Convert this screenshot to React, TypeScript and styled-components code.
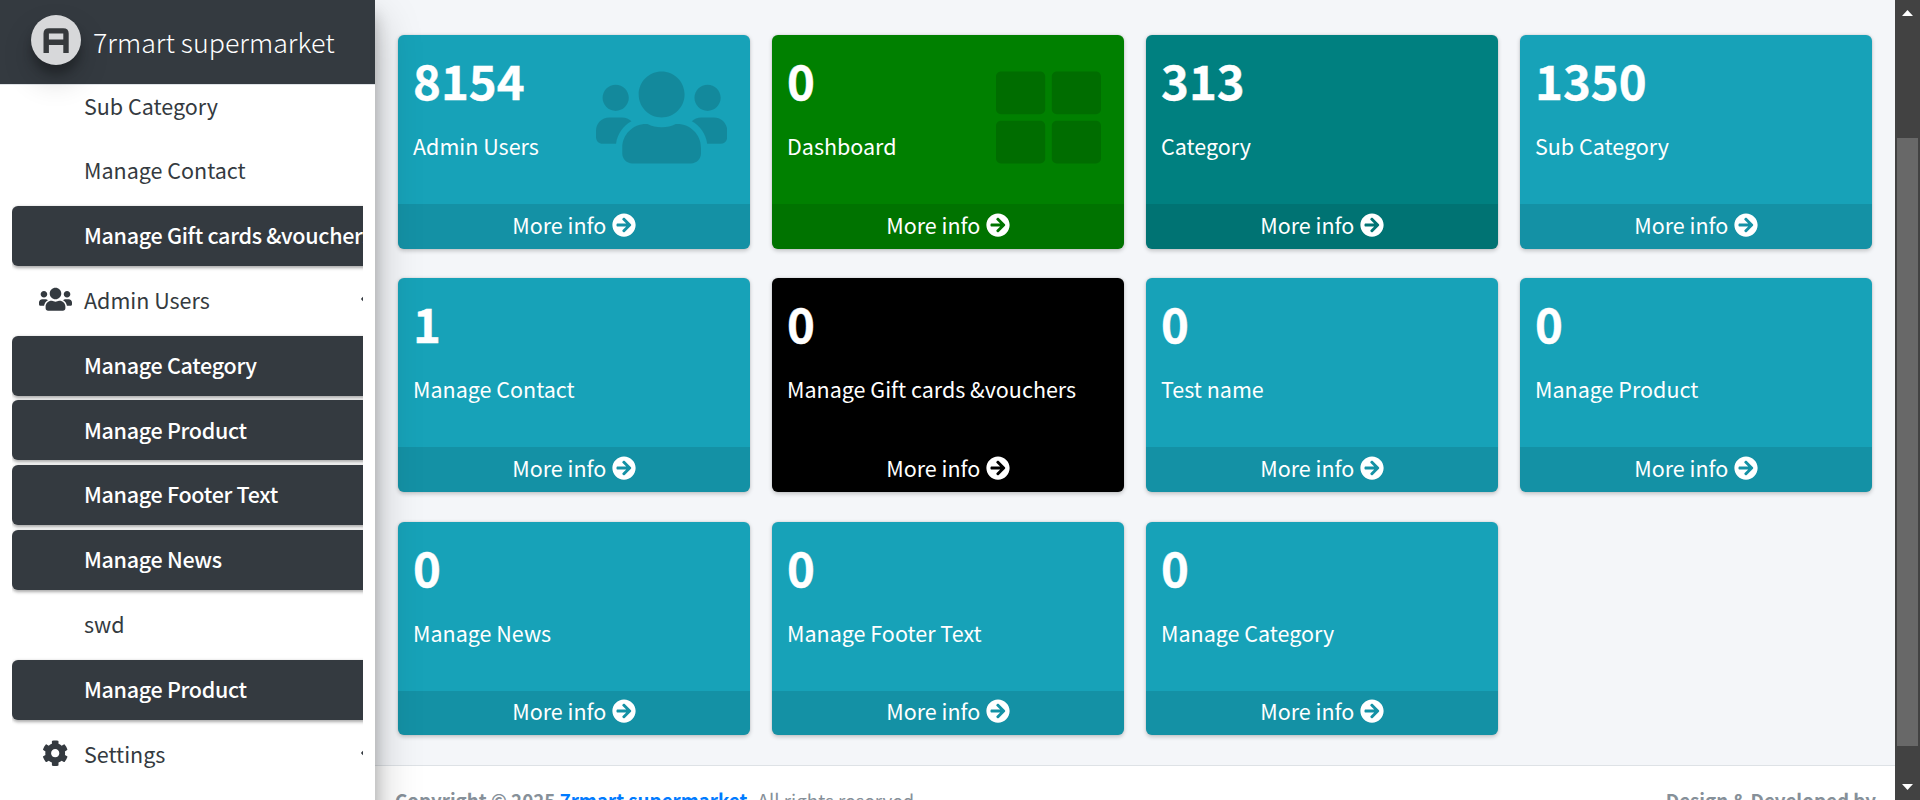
import React from "react";
import styled, { createGlobalStyle } from "styled-components";
import { FaUsers, FaCog, FaThLarge, FaArrowCircleRight, FaAngleLeft } from "react-icons/fa";

const GlobalStyle = createGlobalStyle`
  * { box-sizing: border-box; }
  body {
    margin: 0;
    overflow: hidden;
    background: #f4f6f9;
    font-family: "Source Sans Pro", "Noto Sans CJK SC", sans-serif;
    font-size: 21.5px;
    line-height: 36px;
    color: #212529;
  }
`;

const Page = styled.div`
  display: flex;
  width: 100%;
  height: 800px;
  overflow: hidden;
`;

const Sidebar = styled.aside`
  position: relative;
  z-index: 2;
  flex: 0 0 375px;
  min-width: 0;
  height: 1000px;
  background: #fff;
  box-shadow: 0 21px 42px rgba(0, 0, 0, 0.25), 0 15px 15px rgba(0, 0, 0, 0.22);
`;

const Brand = styled.a`
  position: relative;
  z-index: 1;
  display: flex;
  align-items: flex-start;
  height: 85px;
  padding: 15px 12px 0 31px;
  border-bottom: 1px solid #dee2e6;
  background: #343a40;
  color: #fff;
  white-space: nowrap;
`;

const LogoDisc = styled.span`
  display: flex;
  width: 50px;
  height: 50px;
  border-radius: 50%;
  background: #d7d8da;
  box-shadow: 0 15px 30px rgba(0, 0, 0, 0.19), 0 9px 9px rgba(0, 0, 0, 0.23);
`;

const BrandName = styled.span`
  margin: 9px 0 0 12px;
  font-size: 26.8px;
  font-weight: 300;
`;

const Nav = styled.nav`
  height: 715px;
  margin: 0 12px;
  overflow: hidden;
`;

const NavList = styled.ul`
  width: 372px;
  margin: -8.6px 0 0;
  padding: 0;
  list-style: none;
`;

const NavItem = styled.li<{ $active?: boolean }>`
  display: flex;
  align-items: center;
  height: 60px;
  margin-bottom: 4.8px;
  padding: 0 0 1.5px 24px;
  border-radius: 6px;
  white-space: nowrap;
  color: ${(p) => (p.$active ? "#fff" : "#343a40")};
  font-weight: ${(p) => (p.$active ? 500 : 400)};
  letter-spacing: ${(p) => (p.$active ? "-0.3px" : "normal")};
  background: ${(p) => (p.$active ? "#343a40" : "transparent")};
  box-shadow: ${(p) =>
    p.$active ? "0 1.5px 4.5px rgba(0,0,0,.12), 0 1.5px 3px rgba(0,0,0,.24)" : "none"};
`;

const NavIcon = styled.span<{ $wide?: boolean }>`
  display: flex;
  justify-content: center;
  width: 38.4px;
  margin: 0 9.6px 1px 0;

  svg {
    flex: none;
    width: ${(p) => (p.$wide ? 33 : 26.4)}px;
    height: 26.4px;
  }
`;

const NavArrow = styled.span`
  display: flex;
  margin: 0 12px 2px auto;

  svg { width: 12px; height: 24px; }
`;

const Main = styled.main`
  flex: 1;
  min-width: 0;
  display: flex;
  flex-direction: column;
  height: 900px;
`;

const Content = styled.section`
  height: 765px;
  padding: 35px 23px 0;
`;

const Grid = styled.div`
  display: grid;
  grid-template-columns: repeat(4, 352px);
  grid-auto-rows: 213.5px;
  gap: 29.8px 22px;
`;

const Card = styled.article<{ $bg: string }>`
  display: flex;
  flex-direction: column;
  border-radius: 6px;
  overflow: hidden;
  background: ${(p) => p.$bg};
  color: #fff;
  box-shadow: 0 0 1.5px rgba(0, 0, 0, 0.13), 0 1.5px 4.5px rgba(0, 0, 0, 0.2);
`;

const CardBody = styled.div`
  display: flex;
  justify-content: space-between;
  flex: 1;
  padding: 13px 22.8px 0 15px;
`;

const Count = styled.h3`
  height: 63px;
  margin: 0 0 17px;
  font-size: 47.3px;
  font-weight: 700;
  line-height: 63px;
  -webkit-text-stroke: 0.4px #fff;
`;

const Label = styled.p`
  margin: 0;
  white-space: nowrap;
`;

const CardIcon = styled.div<{ $wide?: boolean }>`
  display: flex;
  margin-top: 17px;
  height: 105px;
  color: rgba(0, 0, 0, 0.15);

  svg {
    flex: none;
    width: ${(p) => (p.$wide ? 131.25 : 105)}px;
    height: 105px;
  }
`;

const MoreInfo = styled.a`
  display: flex;
  justify-content: center;
  align-items: center;
  gap: 5.5px;
  height: 44.5px;
  padding-bottom: 3px;
  background: rgba(0, 0, 0, 0.1);

  svg { width: 24px; height: 24px; }
`;

const Footer = styled.footer`
  display: flex;
  justify-content: space-between;
  padding: 16px 19px 24px 20px;
  height: 135px;
  border-top: 1px solid #dee2e6;
  background: #fff;
  color: #869099;
  font-size: 18.76px;
  white-space: nowrap;
`;

const FooterLink = styled.a`
  color: #007bff;
`;

const ScrollTrack = styled.div`
  display: flex;
  flex-direction: column;
  align-items: center;
  flex: 0 0 25px;
  height: 800px;
  padding: 10px 0;
  background: #424242;
`;

const ScrollArrow = styled.svg`
  display: block;
  width: 11px;
  height: 6px;
`;

const ScrollThumb = styled.div`
  width: 21px;
  height: 608px;
  margin: 122px 0 38px;
  background: #686868;
`;

const navItems: {
  label: string;
  active?: boolean;
  icon?: React.ReactNode;
  wide?: boolean;
  arrow?: boolean;
}[] = [
  { label: "Sub Category" },
  { label: "Manage Contact" },
  { label: "Manage Gift cards &vouchers", active: true },
  { label: "Admin Users", icon: <FaUsers />, wide: true, arrow: true },
  { label: "Manage Category", active: true },
  { label: "Manage Product", active: true },
  { label: "Manage Footer Text", active: true },
  { label: "Manage News", active: true },
  { label: "swd" },
  { label: "Manage Product", active: true },
  { label: "Settings", icon: <FaCog />, arrow: true },
];

const INFO = "#17a2b8";

const cards: {
  count: number;
  label: string;
  bg: string;
  icon?: React.ReactNode;
  wide?: boolean;
}[] = [
  { count: 8154, label: "Admin Users", bg: INFO, icon: <FaUsers />, wide: true },
  { count: 0, label: "Dashboard", bg: "#008000", icon: <FaThLarge /> },
  { count: 313, label: "Category", bg: "#008080" },
  { count: 1350, label: "Sub Category", bg: INFO },
  { count: 1, label: "Manage Contact", bg: INFO },
  { count: 0, label: "Manage Gift cards &vouchers", bg: "#000" },
  { count: 0, label: "Test name", bg: INFO },
  { count: 0, label: "Manage Product", bg: INFO },
  { count: 0, label: "Manage News", bg: INFO },
  { count: 0, label: "Manage Footer Text", bg: INFO },
  { count: 0, label: "Manage Category", bg: INFO },
];

export default function App() {
  return (
    <>
      <GlobalStyle />
      <Page>
        <Sidebar>
          <Brand>
            <LogoDisc>
              <svg width="50" height="50" viewBox="0 0 50 50">
                <path
                  d="M15.2 38V18.5Q15.2 15.9 18 15.9H32.2Q35 15.9 35 18.5V38M15.2 27.3H35"
                  fill="none"
                  stroke="#36393c"
                  strokeWidth="5.4"
                />
              </svg>
            </LogoDisc>
            <BrandName>7rmart supermarket</BrandName>
          </Brand>
          <Nav>
            <NavList>
              {navItems.map((item, i) => (
                <NavItem key={i} $active={item.active}>
                  <NavIcon $wide={item.wide}>{item.icon}</NavIcon>
                  {item.label}
                  {item.arrow && (
                    <NavArrow>
                      <FaAngleLeft />
                    </NavArrow>
                  )}
                </NavItem>
              ))}
            </NavList>
          </Nav>
        </Sidebar>
        <Main>
          <Content>
            <Grid>
              {cards.map((card, i) => (
                <Card key={i} $bg={card.bg}>
                  <CardBody>
                    <div>
                      <Count>{card.count}</Count>
                      <Label>{card.label}</Label>
                    </div>
                    {card.icon && <CardIcon $wide={card.wide}>{card.icon}</CardIcon>}
                  </CardBody>
                  <MoreInfo>
                    More info <FaArrowCircleRight />
                  </MoreInfo>
                </Card>
              ))}
            </Grid>
          </Content>
          <Footer>
            <div>
              <strong>
                Copyright © 2025 <FooterLink>7rmart supermarket</FooterLink>.
              </strong>{" "}
              All rights reserved.
            </div>
            <strong>Design &amp; Developed by</strong>
          </Footer>
        </Main>
        <ScrollTrack>
          <ScrollArrow viewBox="0 0 11 6">
            <path d="M0 6L5.5 0L11 6Z" fill="#fff" />
          </ScrollArrow>
          <ScrollThumb />
          <ScrollArrow viewBox="0 0 11 6">
            <path d="M0 0L5.5 6L11 0Z" fill="#fff" />
          </ScrollArrow>
        </ScrollTrack>
      </Page>
    </>
  );
}
